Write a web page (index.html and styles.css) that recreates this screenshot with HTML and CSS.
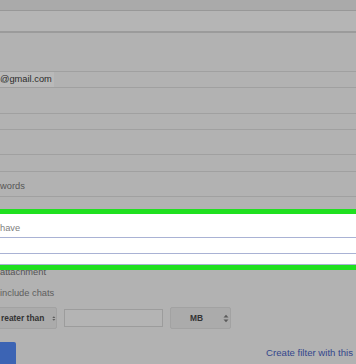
FILE: index.html
```html
<html>
    <head>
        <link rel="stylesheet" href="styles.css">
    </head>
    <body>
        <div class="dialog">
            <div class="strip"></div>
            <div class="row r-22 thick"></div>
            <div class="row r-39"></div>
            <div class="row r-16">
                <span class="value">@gmail.com</span>
            </div>
            <div class="row r-26"></div>
            <div class="row r-16"></div>
            <div class="row r-25"></div>
            <div class="row r-17"></div>
            <div class="row r-25 label-row">
                <span class="label">words</span>
            </div>
            <div class="row r-12 plain"></div>

            <div class="highlight">
                <div class="hl-row hl-24">
                    <span class="hint">have</span>
                </div>
                <div class="hl-row hl-16"></div>
                <div class="hl-row hl-11 plain"></div>
            </div>

            <div class="attach">attachment</div>
            <div class="chats">include chats</div>

            <div class="size-row">
                <div class="select sel-op">
                    <span>reater than</span>
                    <svg class="arrows" width="6" height="9" viewBox="0 0 6 9">
                        <path d="M0.5 3.5 L3 0.8 L5.5 3.5 Z" fill="#5a5a5a"/>
                        <path d="M0.5 5.5 L3 8.2 L5.5 5.5 Z" fill="#5a5a5a"/>
                    </svg>
                </div>
                <div class="size-input"></div>
                <div class="select sel-unit">
                    <span>MB</span>
                    <svg class="arrows" width="6" height="9" viewBox="0 0 6 9">
                        <path d="M0.5 3.5 L3 0.8 L5.5 3.5 Z" fill="#5a5a5a"/>
                        <path d="M0.5 5.5 L3 8.2 L5.5 5.5 Z" fill="#5a5a5a"/>
                    </svg>
                </div>
            </div>

            <div class="footer">
                <div class="button"></div>
                <a class="create" href="#">Create filter with this</a>
            </div>
        </div>
    </body>
</html>
```
FILE: styles.css
```css
body {
    margin: 0;
    background: #b2b2b2;
    font-family: 'Liberation Sans', Arial, sans-serif;
    overflow: hidden;
}
.dialog {
    width: 356px;
    height: 364px;
    overflow: hidden;
}
.strip {
    height: 11px;
    box-sizing: border-box;
    background: #aaaaaa;
    border-bottom: 1px solid #989898;
}
.row {
    box-sizing: border-box;
    border-bottom: 1px solid #a0a0a0;
    display: flex;
    align-items: center;
}
.thick {
    border-bottom: 2px solid #9b9b9b;
    background: #b5b5b5;
}
.plain {
    border-bottom: none;
}
.r-11 { height: 11px; }
.r-12 { height: 12px; }
.r-16 { height: 16px; }
.r-17 { height: 17px; }
.r-22 { height: 22px; }
.r-25 { height: 25px; }
.r-26 { height: 26px; }
.r-39 { height: 39px; }

.value {
    font-size: 9.3px;
    line-height: 15px;
    color: #2c2c2c;
    background: #b9b9b9;
    padding-right: 2px;
}
.label-row {
    align-items: flex-start;
    padding-top: 8px;
}
.label {
    font-size: 9.3px;
    line-height: 12px;
    color: #555;
}

.highlight {
    position: relative;
    z-index: 1;
    background: #fff;
    border-top: 5px solid #20e020;
    border-bottom: 5px solid #20e020;
}
.hl-row {
    box-sizing: border-box;
    border-bottom: 1px solid #a9b2d4;
}
.hl-24 {
    height: 24px;
    padding-top: 8px;
}
.hl-16 { height: 16px; }
.hl-11 { height: 11px; }
.hint {
    display: block;
    font-size: 9.3px;
    line-height: 12px;
    color: #808080;
}

.attach {
    margin-top: -4px;
    font-size: 9.3px;
    line-height: 12px;
    color: #555;
}
.chats {
    margin-top: 9px;
    font-size: 9.3px;
    line-height: 12px;
    color: #5e5e5e;
}

.size-row {
    display: flex;
    align-items: center;
    margin-top: 8px;
    height: 22px;
}
.select {
    box-sizing: border-box;
    height: 22px;
    flex-shrink: 0;
    display: flex;
    align-items: center;
    background: #ababab;
    border: 1px solid #a2a2a2;
    border-radius: 2px;
    font-size: 8.4px;
    font-weight: bold;
    color: #333;
    white-space: nowrap;
}
.sel-op {
    width: 60px;
    margin-left: -3px;
    padding-left: 3px;
}
.sel-op .arrows {
    margin-left: 8px;
}
.size-input {
    box-sizing: border-box;
    flex-shrink: 0;
    width: 99px;
    height: 18px;
    margin-left: 7px;
    background: #b4b4b4;
    border: 1px solid #9c9c9c;
}
.sel-unit {
    width: 61px;
    margin-left: 7px;
    padding-left: 19px;
}
.sel-unit .arrows {
    margin-left: 20px;
}

.footer {
    display: flex;
    align-items: flex-start;
    justify-content: space-between;
    margin-top: 13px;
}
.button {
    width: 16px;
    height: 30px;
    background: #3c64b4;
    border-radius: 0 2px 0 0;
}
.create {
    margin-top: 5px;
    margin-right: 3px;
    font-size: 9.6px;
    line-height: 12px;
    color: #34468c;
    text-decoration: none;
    white-space: nowrap;
}
```
